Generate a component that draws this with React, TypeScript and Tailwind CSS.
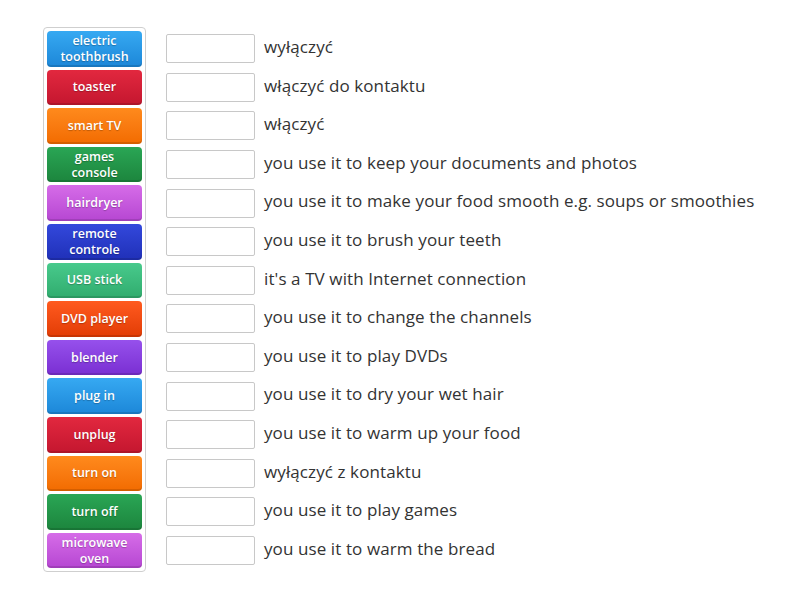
import React from "react";

const tiles: { label: string[]; cls: string }[] = [
  { label: ["electric", "toothbrush"], cls: "bg-gradient-to-b from-[#36a9f2] to-[#1c87d8]" },
  { label: ["toaster"], cls: "bg-gradient-to-b from-[#e2283f] to-[#c4162f]" },
  { label: ["smart TV"], cls: "bg-gradient-to-b from-[#ff8a1c] to-[#f26b00]" },
  { label: ["games", "console"], cls: "bg-gradient-to-b from-[#2aa655] to-[#1c853d]" },
  { label: ["hairdryer"], cls: "bg-gradient-to-b from-[#d66ce8] to-[#b646d2]" },
  { label: ["remote", "controle"], cls: "bg-gradient-to-b from-[#3348dc] to-[#2030b8]" },
  { label: ["USB stick"], cls: "bg-gradient-to-b from-[#48ca8c] to-[#30ac6e]" },
  { label: ["DVD player"], cls: "bg-gradient-to-b from-[#ff5a1e] to-[#e23c04]" },
  { label: ["blender"], cls: "bg-gradient-to-b from-[#9650ec] to-[#7a2ed2]" },
  { label: ["plug in"], cls: "bg-gradient-to-b from-[#36a9f2] to-[#1c87d8]" },
  { label: ["unplug"], cls: "bg-gradient-to-b from-[#e2283f] to-[#c4162f]" },
  { label: ["turn on"], cls: "bg-gradient-to-b from-[#ff8a1c] to-[#f26b00]" },
  { label: ["turn off"], cls: "bg-gradient-to-b from-[#2aa655] to-[#1c853d]" },
  { label: ["microwave", "oven"], cls: "bg-gradient-to-b from-[#d66ce8] to-[#b646d2]" },
];

const defs = [
  "wyłączyć",
  "włączyć do kontaktu",
  "włączyć",
  "you use it to keep your documents and photos",
  "you use it to make your food smooth e.g. soups or smoothies",
  "you use it to brush your teeth",
  "it's a TV with Internet connection",
  "you use it to change the channels",
  "you use it to play DVDs",
  "you use it to dry your wet hair",
  "you use it to warm up your food",
  "wyłączyć z kontaktu",
  "you use it to play games",
  "you use it to warm the bread",
];

export default function App() {
  return (
    <div className="w-[800px] h-[600px] bg-white flex items-start pt-[27px] pl-[43px] font-['Open_Sans',sans-serif]">
      <div className="flex flex-col gap-[3px] p-[3px] border border-[#cfcfcf] rounded-[4px] bg-white">
        {tiles.map((t, i) => (
          <div
            key={i}
            className={`w-[95px] h-[35.6px] rounded-[4px] flex items-center justify-center text-center text-white text-[12.5px] font-semibold leading-[16px] shadow-[inset_0_-2px_0_rgba(0,0,0,0.12)] [text-shadow:0_1px_1px_rgba(0,0,0,0.25)] ${t.cls}`}
          >
            <span>
              {t.label.map((l, j) => (
                <React.Fragment key={j}>
                  {j > 0 && <br />}
                  {l}
                </React.Fragment>
              ))}
            </span>
          </div>
        ))}
      </div>
      <div className="flex flex-col ml-[20px] pt-[2.5px]">
        {defs.map((d, i) => (
          <div key={i} className="h-[38.6px] flex items-center">
            <div className="w-[89px] h-[29px] border border-[#c8c8c8] rounded-[2px] bg-white" />
            <span className="ml-[9px] pb-[4px] text-[17px] tracking-[0.1px] text-[#333] whitespace-nowrap">{d}</span>
          </div>
        ))}
      </div>
    </div>
  );
}
